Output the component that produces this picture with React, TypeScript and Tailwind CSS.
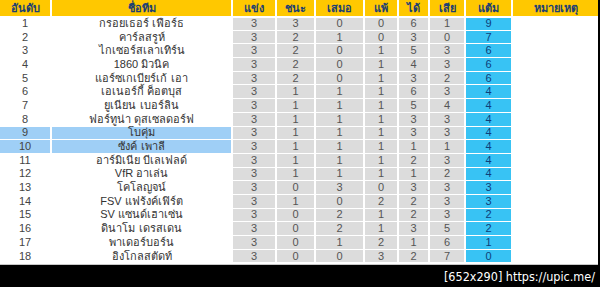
const headers = ["อันดับ", "ชื่อทีม", "แข่ง", "ชนะ", "เสมอ", "แพ้", "ได้", "เสีย", "แต้ม", "หมายเหตุ"];

type Row = { name: string; stats: number[]; pts: number; hl?: boolean };

const rows: Row[] = [
  { name: "กรอยเธอร์ เฟือร์ธ", stats: [3, 3, 0, 0, 6, 1], pts: 9 },
  { name: "คาร์ลสรูห์", stats: [3, 2, 1, 0, 3, 0], pts: 7 },
  { name: "ไกเซอร์สเลาเทิร์น", stats: [3, 2, 0, 1, 5, 3], pts: 6 },
  { name: "1860 มิวนิค", stats: [3, 2, 0, 1, 4, 3], pts: 6 },
  { name: "แอร์ซเกเบียร์เก้ เอา", stats: [3, 2, 0, 1, 3, 2], pts: 6 },
  { name: "เอเนอร์กี้ ค็อตบุส", stats: [3, 1, 1, 1, 6, 3], pts: 4 },
  { name: "ยูเนียน เบอร์ลิน", stats: [3, 1, 1, 1, 5, 4], pts: 4 },
  { name: "ฟอร์ทูน่า ดุสเซลดอร์ฟ", stats: [3, 1, 1, 1, 3, 3], pts: 4 },
  { name: "โบคุ่ม", stats: [3, 1, 1, 1, 3, 3], pts: 4, hl: true },
  { name: "ซังค์ เพาลี", stats: [3, 1, 1, 1, 1, 1], pts: 4, hl: true },
  { name: "อาร์มิเนีย บีเลเฟลด์", stats: [3, 1, 1, 1, 2, 3], pts: 4 },
  { name: "VfR อาเล่น", stats: [3, 1, 1, 1, 1, 2], pts: 4 },
  { name: "โคโลญจน์", stats: [3, 0, 3, 0, 3, 3], pts: 3 },
  { name: "FSV แฟร้งค์เฟิร์ต", stats: [3, 1, 0, 2, 2, 3], pts: 3 },
  { name: "SV แซนด์เฮาเซ่น", stats: [3, 0, 2, 1, 2, 3], pts: 2 },
  { name: "ดินาโม เดรสเดน", stats: [3, 0, 2, 1, 3, 5], pts: 2 },
  { name: "พาเดอร์บอร์น", stats: [3, 0, 1, 2, 1, 6], pts: 1 },
  { name: "อิงโกลสตัดท์", stats: [3, 0, 0, 3, 2, 7], pts: 0 },
];

export default function App() {
  return (
    <div className="w-[600px] h-[287px] bg-black flex flex-col overflow-hidden font-['Liberation_Sans','Noto_Sans',sans-serif]">
      <div className="w-[598px] h-[266px] bg-white border-b border-[#c8c8c8]">
        <div className="grid grid-cols-[50px_179px_42px_37px_47px_32px_29px_34px_45px_85px] gap-x-[2px] gap-y-px grid-rows-[16px] auto-rows-[12.7px] text-[11px] leading-none">
          {headers.map((h) => (
            <div key={h} className="bg-[#ffc800] text-[#1b3f73] font-bold flex items-center justify-center">
              {h}
            </div>
          ))}
          {rows.map((r, i) => (
            <div key={r.name} className="contents">
              <div className={`${r.hl ? "bg-[#9fcff6]" : "bg-white"} ${i === 0 ? "mt-px" : ""} text-[#444] flex items-center justify-center`}>
                {i + 1}
              </div>
              <div className={`${r.hl ? "bg-[#9fcff6]" : "bg-white"} ${i === 0 ? "mt-px" : ""} text-[#333] flex items-center justify-center`}>
                {r.name}
              </div>
              {r.stats.map((s, j) => (
                <div key={j} className={`bg-[#dcdcdc] ${i === 0 ? "mt-px" : ""} text-[#555] flex items-center justify-center`}>
                  {s}
                </div>
              ))}
              <div className={`bg-[#38c3f4] ${i === 0 ? "mt-px" : ""} text-[#0d3f7a] flex items-center justify-center`}>
                {r.pts}
              </div>
              <div className="bg-white" />
            </div>
          ))}
        </div>
      </div>
      <div className="flex justify-end pr-[5px] pt-[3px] text-white text-[12.5px] font-['DejaVu_Sans_Condensed','DejaVu_Sans',sans-serif]">
        [652x290] https://upic.me/
      </div>
    </div>
  );
}
